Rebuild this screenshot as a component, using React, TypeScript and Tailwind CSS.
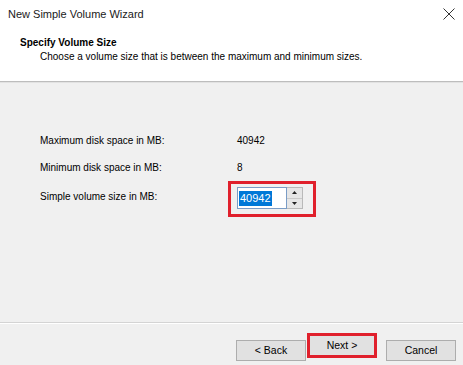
const body = { fontFamily: '"Liberation Sans", Arial, sans-serif' };

function Spinner() {
  return (
    <div className="flex flex-col w-[16px] h-[22px] border border-l-0 border-[#b9b9b9] bg-[#e6e6e6]">
      <div className="flex-1 flex items-center justify-center border-b border-[#c9c9c9]">
        <svg width="5" height="3" viewBox="0 0 5 3">
          <path d="M0 3 L2.5 0 L5 3 Z" fill="#222" />
        </svg>
      </div>
      <div className="flex-1 flex items-center justify-center">
        <svg width="5" height="3" viewBox="0 0 5 3">
          <path d="M0 0 L2.5 3 L5 0 Z" fill="#222" />
        </svg>
      </div>
    </div>
  );
}

function WizButton({ label }: { label: string }) {
  return (
    <button
      type="button"
      className="w-[70px] h-[21px] bg-[#e1e1e1] border border-[#adadad] text-[10.5px] text-black"
      style={body}
    >
      {label}
    </button>
  );
}

export default function App() {
  return (
    <div className="w-[463px] h-[365px] bg-[#f0f0f0] flex flex-col overflow-hidden">
      {/* header */}
      <div className="bg-white h-[81px] flex flex-col">
        <div className="h-[28px] flex items-center justify-between pl-[8px] pr-[7px]">
          <span className="text-[11px] text-[#1a1a1a]" style={body}>
            New Simple Volume Wizard
          </span>
          <svg width="12" height="12" viewBox="0 0 12 12" className="mr-[1px]">
            <path d="M0.5 0.5 L11.5 11.5 M11.5 0.5 L0.5 11.5" stroke="#333" strokeWidth="1" />
          </svg>
        </div>
        <div className="pl-[20px] pt-[8px] text-black" style={body}>
          <div className="text-[10px] font-bold leading-[14px]">Specify Volume Size</div>
          <div className="text-[10px] leading-[14px] pl-[20px]">
            Choose a volume size that is between the maximum and minimum sizes.
          </div>
        </div>
      </div>
      <div className="h-[1px] bg-[#bdbdbd]" />
      <div className="h-[1px] bg-[#e2e2e2]" />

      {/* body */}
      <div className="flex-1 pl-[40px] pt-[44px] text-[10px] text-black" style={body}>
        <div className="flex items-center h-[27px]">
          <span className="w-[197px]">Maximum disk space in MB:</span>
          <span>40942</span>
        </div>
        <div className="flex items-center h-[27px]">
          <span className="w-[197px]">Minimum disk space in MB:</span>
          <span>8</span>
        </div>
        <div className="flex items-center h-[36px]">
          <span className="w-[197px] mb-[6px]">Simple volume size in MB:</span>
          <div className="ml-[-9px] w-[88px] h-[36px] border-[3px] border-[#e0202c] pl-[6px] pt-[3px]">
            <div className="flex">
              <div className="w-[50px] h-[22px] bg-white border border-[#7a9cc6] flex items-center pl-[1px]">
                <span className="bg-[#0078d7] text-white px-[1px] leading-[15px] text-[11px]">40942</span>
              </div>
              <Spinner />
            </div>
          </div>
        </div>
      </div>

      {/* footer */}
      <div className="h-[1px] bg-[#d4d4d4]" />
      <div className="h-[1px] bg-white" />
      <div className="h-[41px] flex items-start justify-end pr-[7px] pt-[9px]">
        <div className="mt-[3px]">
          <WizButton label="< Back" />
        </div>
        <div className="ml-[1px] border-[3px] border-[#e0202c]">
          <div className="flex">
            <button
              type="button"
              className="w-[64px] h-[19px] bg-[#e1e1e1] text-[10.5px] text-black"
              style={body}
            >
              Next &gt;
            </button>
          </div>
        </div>
        <div className="ml-[9px] mt-[3px]">
          <WizButton label="Cancel" />
        </div>
      </div>
    </div>
  );
}
